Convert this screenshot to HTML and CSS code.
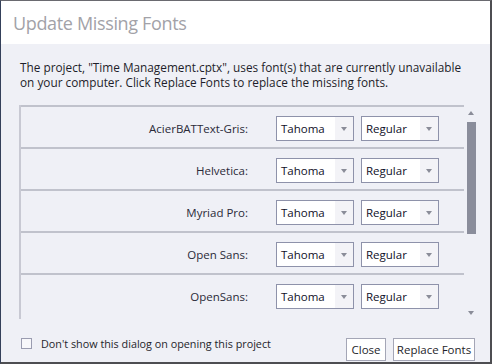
FILE: index.html
```html
<!DOCTYPE html>
<html lang="en">
<head>
  <meta charset="UTF-8">
  <title>Update Missing Fonts</title>
  <link rel="stylesheet" href="styles.css">
</head>
<body>
  <div class="dialog">
    <div class="title-bar">Update Missing Fonts</div>
    <div class="content">
      <p class="message">The project, "Time Management.cptx", uses font(s) that are currently unavailable<br>on your computer. Click Replace Fonts to replace the missing fonts.</p>

      <div class="font-list">
        <div class="rows">
          <div class="row">
            <span class="font-name">AcierBATText-Gris:</span>
            <div class="combo"><span>Tahoma</span><i class="arrow"></i></div>
            <div class="combo"><span>Regular</span><i class="arrow"></i></div>
          </div>
          <div class="row">
            <span class="font-name">Helvetica:</span>
            <div class="combo"><span>Tahoma</span><i class="arrow"></i></div>
            <div class="combo"><span>Regular</span><i class="arrow"></i></div>
          </div>
          <div class="row">
            <span class="font-name">Myriad Pro:</span>
            <div class="combo"><span>Tahoma</span><i class="arrow"></i></div>
            <div class="combo"><span>Regular</span><i class="arrow"></i></div>
          </div>
          <div class="row">
            <span class="font-name">Open Sans:</span>
            <div class="combo"><span>Tahoma</span><i class="arrow"></i></div>
            <div class="combo"><span>Regular</span><i class="arrow"></i></div>
          </div>
          <div class="row">
            <span class="font-name">OpenSans:</span>
            <div class="combo"><span>Tahoma</span><i class="arrow"></i></div>
            <div class="combo"><span>Regular</span><i class="arrow"></i></div>
          </div>
        </div>
        <div class="scrollbar">
          <i class="scroll-up"></i>
          <div class="thumb"></div>
          <i class="scroll-down"></i>
        </div>
      </div>

      <div class="footer">
        <label class="dont-show"><span class="checkbox"></span>Don't show this dialog on opening this project</label>
        <div class="buttons">
          <button class="btn-close">Close</button>
          <button class="btn-replace">Replace Fonts</button>
        </div>
      </div>
    </div>
  </div>
</body>
</html>
```

FILE: styles.css
```css
body {
  margin: 0;
  font-family: 'Open Sans', 'DejaVu Sans', sans-serif;
  font-size: 11.5px;
  color: #1e1e2a;
}

.dialog {
  width: 492px;
  height: 364px;
  box-sizing: border-box;
  display: flex;
  flex-direction: column;
  border: 1px solid #6a6a70;
  border-left-color: #34405a;
  border-right: 2px solid #4e4e52;
  border-bottom: 2px solid #4e4e52;
  background: #eff0f6;
}

.title-bar {
  height: 43px;
  background: #fff;
  padding-left: 12px;
  display: flex;
  align-items: center;
  font-size: 18px;
  color: #a2a2a8;
  letter-spacing: -0.35px;
}

.content {
  flex: 1;
  display: flex;
  flex-direction: column;
  padding: 0 14px 0 18px;
}

.message {
  margin: 16px 0 0 1px;
  font-size: 11.8px;
  line-height: 15px;
  white-space: nowrap;
}

/* List of missing fonts */
.font-list {
  display: flex;
  margin-top: 15px;
  height: 214px;
}

.rows {
  width: 445px;
  border-left: 2px solid #c8c9d3;
  box-sizing: border-box;
}

.row {
  height: 42px;
  box-sizing: border-box;
  border-top: 2px solid #c0c2cc;
  display: flex;
  align-items: center;
  padding-top: 3px;
}

.font-name {
  width: 227px;
  text-align: right;
  margin-right: 28px;
  color: #2a2a38;
}

.combo {
  width: 78px;
  height: 25px;
  box-sizing: border-box;
  border: 1px solid #8e92aa;
  background: #fff;
  display: flex;
  align-items: center;
  margin-right: 7px;
}

.combo span {
  flex: 1;
  padding-left: 4px;
  color: #101028;
}

.combo .arrow {
  width: 18px;
  height: 100%;
  background: #f3f3f7;
  position: relative;
}

.combo .arrow::after {
  content: '';
  position: absolute;
  left: 6px;
  top: 10px;
  border-left: 3.5px solid transparent;
  border-right: 3.5px solid transparent;
  border-top: 4px solid #8a8c98;
}

/* Scrollbar */
.scrollbar {
  width: 10px;
  margin-left: 2px;
  display: flex;
  flex-direction: column;
  align-items: center;
}

.scroll-up, .scroll-down {
  width: 0;
  height: 0;
  border-left: 3.5px solid transparent;
  border-right: 3.5px solid transparent;
}

.scroll-up {
  border-bottom: 4px solid #8a8c98;
  margin-top: 6px;
}

.thumb {
  width: 9px;
  height: 112px;
  margin-top: 7px;
  background: #8a8d9b;
}

.scroll-down {
  border-top: 4px solid #8a8c98;
  margin-top: auto;
  margin-bottom: 4px;
}

/* Footer */
.footer {
  flex: 1;
  display: flex;
  align-items: center;
  justify-content: space-between;
  padding-top: 5px;
}

.dont-show {
  display: flex;
  align-items: center;
  gap: 9px;
  margin-left: 2px;
  font-size: 10.8px;
}

.checkbox {
  width: 9px;
  height: 9px;
  border: 1px solid #9a9cb0;
  background: #f7f7fa;
}

.buttons {
  display: flex;
  gap: 7px;
  margin-right: 1px;
  margin-top: 12px;
}

.buttons button {
  height: 23px;
  padding: 0;
  font-family: inherit;
  font-size: 11.5px;
  color: #1e1e2a;
  background: #fff;
  border: 1px solid #a4a6b6;
}

.btn-close {
  width: 40px;
}

.btn-replace {
  width: 82px;
}
```
